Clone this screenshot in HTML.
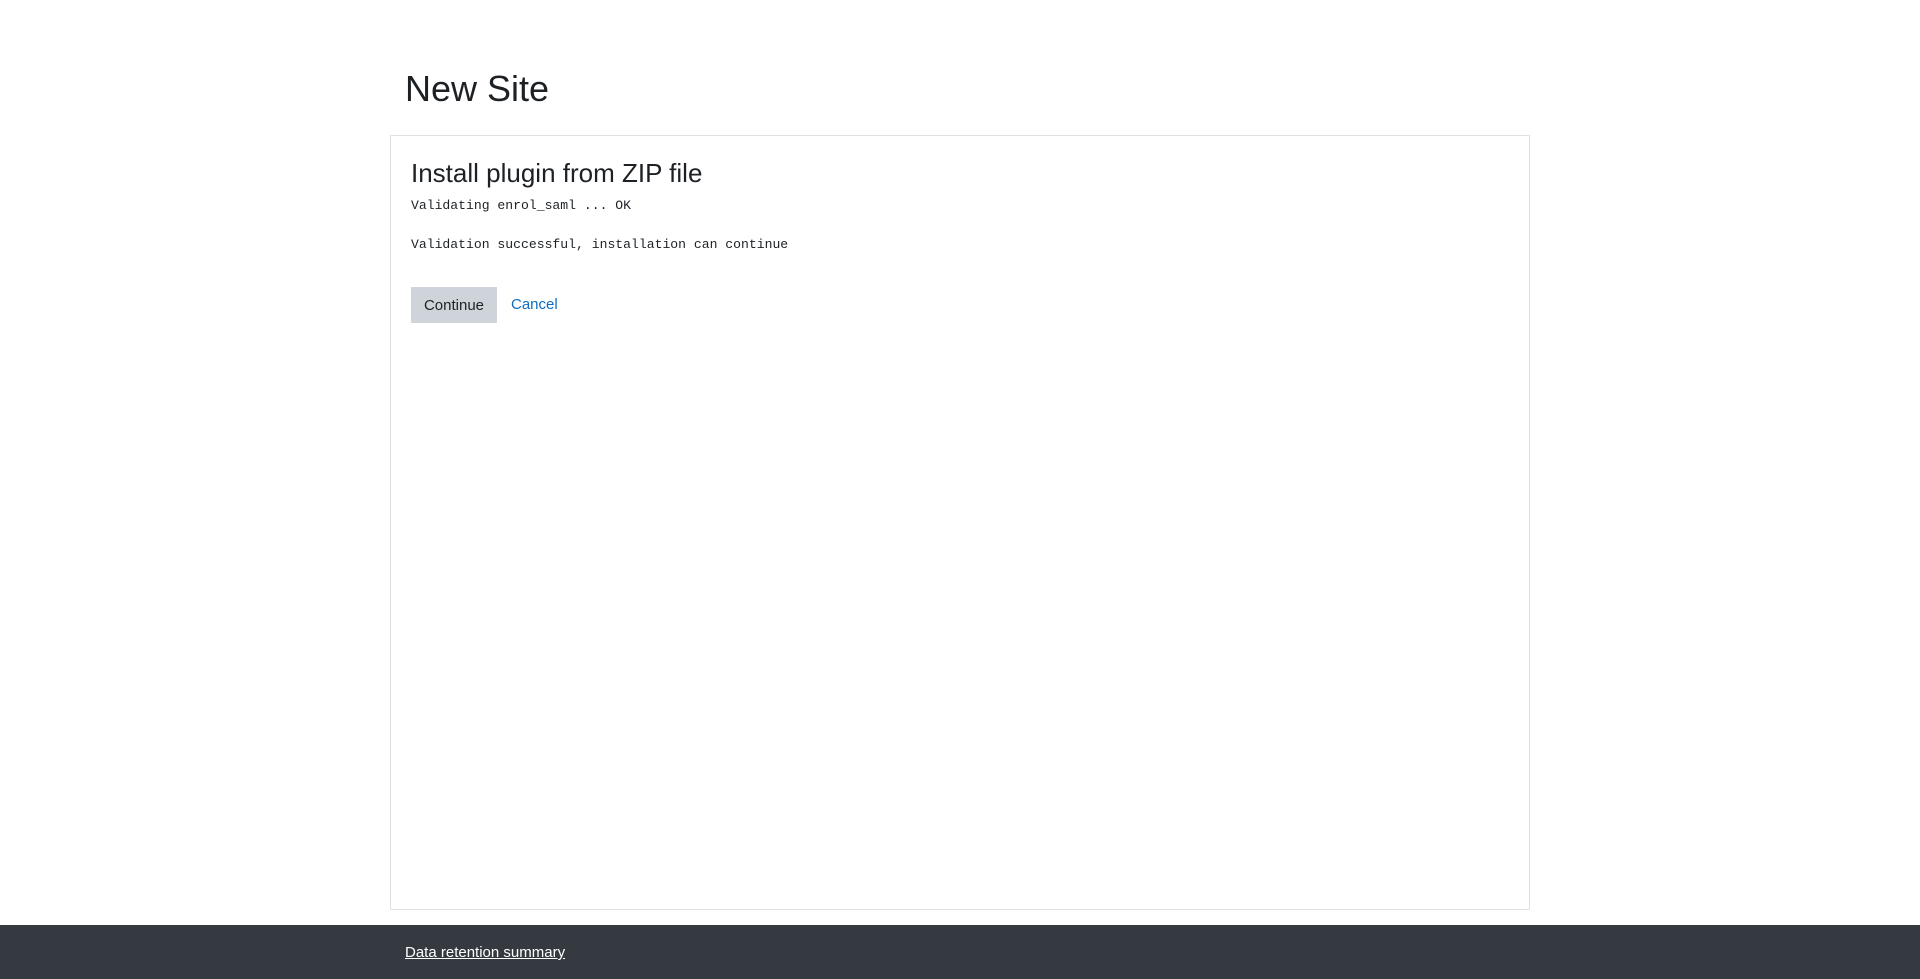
<!DOCTYPE html>
<html><head><style>
body{margin:0;width:1920px;height:979px;background:#fff;font-family:"Liberation Sans",sans-serif;position:relative;overflow:hidden}
.t{position:absolute;left:405px;top:68px;font-size:36px;font-weight:300;color:#1d2125;margin:0}
.card{position:absolute;left:390px;top:135px;width:1140px;height:775px;border:1px solid #dee2e6;box-sizing:border-box}
.h{position:absolute;left:411px;top:158px;font-size:26px;color:#1d2125;margin:0;font-weight:300}
.m{position:absolute;left:411px;font-family:"Liberation Mono",monospace;font-size:13.1px;color:#1d2125}
.btn{position:absolute;left:411px;top:287px;width:86px;height:36px;background:#ced4da;color:#1d2125;font-size:15px;line-height:38px;text-align:center}
.c{position:absolute;left:511px;top:296px;font-size:15px;color:#0f6cbf}
.f{position:absolute;left:0;top:925px;width:1920px;height:54px;background:#343a40}
.f a{position:absolute;left:405px;top:19px;color:#fff;font-size:15px;text-decoration:underline}
</style></head><body>
<h1 class="t">New Site</h1>
<div class="card"></div>
<h2 class="h">Install plugin from ZIP file</h2>
<div class="m" style="top:198px">Validating enrol_saml ... OK</div>
<div class="m" style="top:237px">Validation successful, installation can continue</div>
<div class="btn">Continue</div>
<div class="c">Cancel</div>
<div class="f"><a>Data retention summary</a></div>
</body></html>
